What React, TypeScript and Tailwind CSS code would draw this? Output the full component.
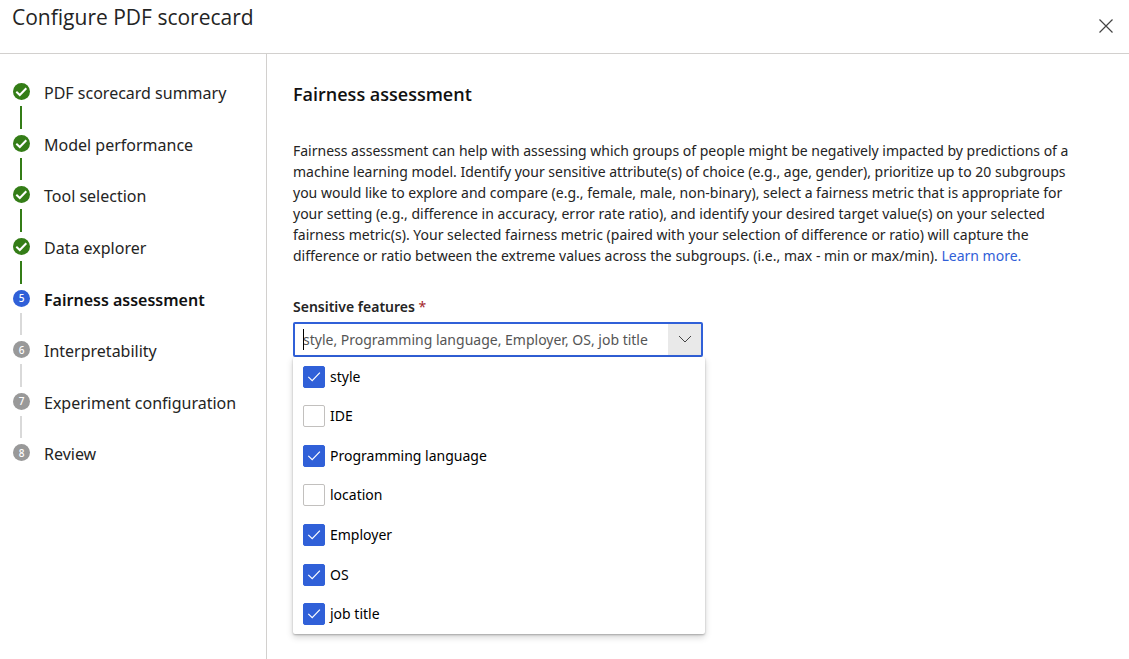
import { useState } from "react";

type StepState = "done" | "current" | "pending";

const steps: { label: string; state: StepState }[] = [
  { label: "PDF scorecard summary", state: "done" },
  { label: "Model performance", state: "done" },
  { label: "Tool selection", state: "done" },
  { label: "Data explorer", state: "done" },
  { label: "Fairness assessment", state: "current" },
  { label: "Interpretability", state: "pending" },
  { label: "Experiment configuration", state: "pending" },
  { label: "Review", state: "pending" },
];

const markerColor: Record<StepState, string> = {
  done: "bg-[#347d17]",
  current: "bg-[#3060d8]",
  pending: "bg-[#999999]",
};

const features = ["style", "IDE", "Programming language", "location", "Employer", "OS", "job title"];

function StepList() {
  return (
    <nav aria-label="Steps" className="w-[267px] shrink-0 border-r border-[#d2d0ce] pt-[29px] pl-[13px]">
      <ol className="grid h-[413px] auto-rows-fr">
        {steps.map((step, i) => (
          <li key={step.label} className="flex gap-[14px]" aria-current={step.state === "current" ? "step" : undefined}>
            <div className="flex w-[17px] flex-col">
              <span
                className={`flex size-[17px] shrink-0 items-center justify-center rounded-full text-[10px] leading-none font-medium text-white ${markerColor[step.state]}`}
              >
                {step.state === "done" ? (
                  <svg viewBox="0 0 17 17" className="size-[17px]" fill="none" stroke="white" strokeWidth="2" aria-hidden="true">
                    <path d="M3.3 8.7 6.8 12 13.3 5.3" />
                  </svg>
                ) : (
                  i + 1
                )}
              </span>
              {i < steps.length - 1 && (
                <span className={`my-[6px] ml-[7px] w-[2px] flex-1 ${step.state === "done" ? "bg-[#347d17]" : "bg-[#d9d9d9]"}`} />
              )}
            </div>
            <span className={`text-[16px] leading-5 whitespace-nowrap ${step.state === "current" ? "font-semibold text-[#111111]" : "text-[#242424]"}`}>
              {step.label}
            </span>
          </li>
        ))}
      </ol>
    </nav>
  );
}

function FeaturePicker() {
  const [selected, setSelected] = useState<string[]>(["style", "Programming language", "Employer", "OS", "job title"]);
  const toggle = (name: string) =>
    setSelected(features.filter((f) => (f === name ? !selected.includes(f) : selected.includes(f))));

  return (
    <div className="mt-[31px] flex flex-col">
      <label htmlFor="sensitive-features" className="text-[14px] leading-5 font-semibold text-[#242424]">
        Sensitive features <span className="font-normal text-[#a4262c]">*</span>
      </label>
      <div className="relative mt-[5px] w-[410px] max-w-full">
        <div className="flex h-[35px] rounded-[2px] border-2 border-[#3060d8] bg-white">
          <input
            id="sensitive-features"
            role="combobox"
            aria-expanded="true"
            aria-controls="feature-options"
            readOnly
            value={selected.join(", ")}
            className="min-w-0 flex-1 bg-transparent pl-2 text-[14px] text-[#555555] outline-none"
          />
          <button type="button" aria-label="Toggle options" className="flex w-[33px] items-center justify-center bg-[#e9e9e9]">
            <svg viewBox="0 0 14 8" className="mb-[2px] h-2 w-[14px]" fill="none" stroke="#444" strokeWidth="1" aria-hidden="true">
              <path d="M1 1 7 7 13 1" />
            </svg>
          </button>
        </div>
        <span className="absolute top-[7px] left-[10px] h-[21px] w-px bg-black" />
        <div
          id="feature-options"
          className="absolute top-full left-0 grid h-[277px] w-[412px] auto-rows-fr rounded-[2px] bg-white shadow-[0_3px_7px_rgba(0,0,0,0.18),0_1px_2px_rgba(0,0,0,0.25)]"
        >
          {features.map((name) => (
            <label key={name} className="flex items-center gap-[5px] pl-[10px] text-[14px] leading-5 text-black">
              <span className="relative flex size-[22px]">
                <input
                  type="checkbox"
                  checked={selected.includes(name)}
                  onChange={() => toggle(name)}
                  className="peer size-[22px] appearance-none rounded-[2px] border border-[#c2c0be] bg-white checked:border-[#3060d8] checked:bg-[#3060d8]"
                />
                <svg
                  viewBox="0 0 22 22"
                  className="pointer-events-none absolute inset-0 hidden size-[22px] peer-checked:block"
                  fill="none"
                  stroke="white"
                  strokeWidth="1.2"
                  aria-hidden="true"
                >
                  <path d="M5.3 10.8 9.2 14.7 16.9 6.6" />
                </svg>
              </span>
              {name}
            </label>
          ))}
        </div>
      </div>
    </div>
  );
}

export default function App() {
  return (
    <div className="flex min-h-screen flex-col bg-white font-['Noto_Sans','Open_Sans',sans-serif]">
      <header className="flex h-[54px] items-start justify-between border-b border-[#d2d0ce] pr-[15px] pl-3">
        <h1 className="pt-[3px] font-['Open_Sans','Noto_Sans',sans-serif] text-[21px] leading-7 text-[#242424]">
          Configure PDF scorecard
        </h1>
        <button type="button" aria-label="Close" className="mt-[18px] flex size-4 items-center justify-center">
          <svg viewBox="0 0 16 16" className="size-4" fill="none" stroke="#444" strokeWidth="1.2" aria-hidden="true">
            <path d="M1.5 1.5 14.5 14.5M14.5 1.5 1.5 14.5" />
          </svg>
        </button>
      </header>
      <div className="flex flex-1">
        <StepList />
        <main className="min-w-0 flex-1 pt-[26px] pr-10 pl-[26px]">
          <h2 className="font-['Open_Sans','Noto_Sans',sans-serif] text-[18px] leading-7 font-semibold text-[#111111]">
            Fairness assessment
          </h2>
          <p className="mt-[32px] text-[14px] leading-[21px] text-[#242424]">
            Fairness assessment can help with assessing which groups of people might be negatively impacted by predictions of a
            machine learning model. Identify your sensitive attribute(s) of choice (e.g., age, gender), prioritize up to 20
            subgroups you would like to explore and compare (e.g., female, male, non-binary), select a fairness metric that is
            appropriate for your setting (e.g., difference in accuracy, error rate ratio), and identify your desired target
            value(s) on your selected fairness metric(s). Your selected fairness metric (paired with your selection of difference
            or ratio) will capture the difference or ratio between the extreme values across the subgroups. (i.e., max - min or
            max/min).{" "}
            <a href="#" className="text-[#3060d8]">
              Learn more.
            </a>
          </p>
          <FeaturePicker />
        </main>
      </div>
    </div>
  );
}
